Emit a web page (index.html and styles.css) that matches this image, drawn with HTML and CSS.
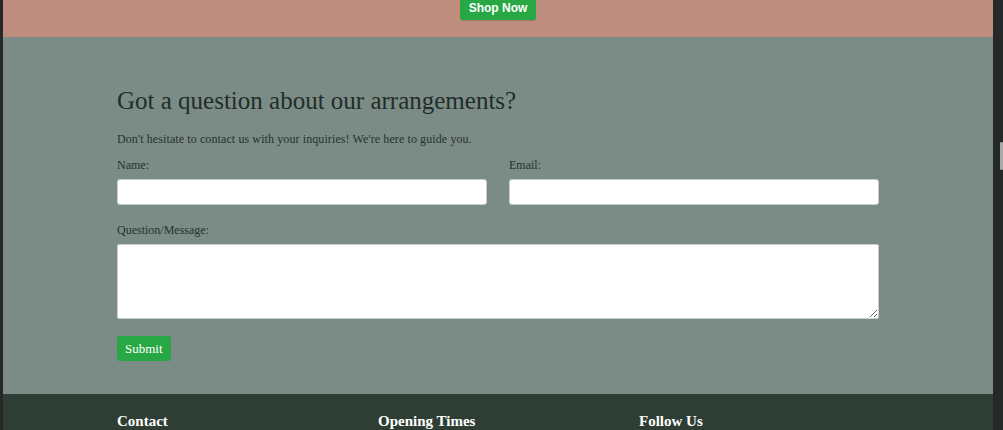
FILE: index.html
```html
<!DOCTYPE html>
<html lang="en">
<head>
<meta charset="utf-8">
<title>Contact</title>
<link rel="stylesheet" href="styles.css">
</head>
<body>
<div class="page">
  <section class="promo">
    <a class="shop-btn" href="#">Shop Now</a>
  </section>
  <section class="contact">
    <div class="container">
      <h2 class="contact-title">Got a question about our arrangements?</h2>
      <p class="contact-intro">Don't hesitate to contact us with your inquiries! We're here to guide you.</p>
      <form class="contact-form">
        <div class="form-row">
          <div class="field">
            <label class="field-label" for="name">Name:</label>
            <input class="field-input" id="name" type="text">
          </div>
          <div class="field">
            <label class="field-label" for="email">Email:</label>
            <input class="field-input" id="email" type="email">
          </div>
        </div>
        <div class="field">
          <label class="field-label" for="msg">Question/Message:</label>
          <textarea class="field-textarea" id="msg"></textarea>
        </div>
        <button class="submit-btn" type="button">Submit</button>
      </form>
    </div>
  </section>
  <footer class="footer">
    <div class="container footer-grid">
      <h3 class="footer-title">Contact</h3>
      <h3 class="footer-title">Opening Times</h3>
      <h3 class="footer-title">Follow Us</h3>
    </div>
  </footer>
</div>
<div class="scroll-thumb"></div>
</body>
</html>
```
FILE: styles.css
```css
html, body {
  margin: 0;
  height: 100%;
  overflow: hidden;
}
body {
  background: #262829;
  padding: 0 10px 0 3px;
  font-family: "Liberation Serif", "Times New Roman", serif;
  color: #27322e;
}
.page {
  background: #7a8c85;
  height: 100%;
}
.promo {
  height: 37px;
  box-sizing: border-box;
  background: #be8d7d;
  display: flex;
  justify-content: center;
  align-items: flex-end;
  padding-bottom: 17px;
  overflow: hidden;
}
.shop-btn {
  display: block;
  height: 23px;
  line-height: 23px;
  padding: 0 9px;
  background: #28a745;
  color: #fff;
  font-family: "Liberation Sans", Arial, sans-serif;
  font-weight: bold;
  font-size: 12px;
  text-decoration: none;
  border-radius: 3px;
  box-shadow: 0 1px 1px rgba(0,0,0,0.15);
}
.contact {
  height: 357px;
  box-sizing: border-box;
  padding-top: 48px;
}
.container {
  width: 762px;
  margin: 0 auto;
}
.contact-title {
  margin: 0 0 14px;
  font-size: 25px;
  font-weight: normal;
  line-height: 32px;
  color: #222c29;
}
.contact-intro {
  margin: 0 0 10px;
  font-size: 12px;
  line-height: 16px;
  letter-spacing: 0.1px;
}
.form-row {
  display: grid;
  grid-template-columns: 1fr 1fr;
  column-gap: 22px;
  margin-bottom: 17px;
}
.field {
  display: flex;
  flex-direction: column;
}
.field-label {
  font-size: 12px;
  line-height: 16px;
  margin-bottom: 6px;
}
.field-input {
  height: 26px;
  box-sizing: border-box;
  border: 1px solid #c9cfcd;
  border-radius: 3px;
  background: #fff;
  margin: 0;
}
.field-textarea {
  height: 75px;
  box-sizing: border-box;
  border: 1px solid #c9cfcd;
  border-radius: 2px;
  background: #fff;
  margin: 0;
  resize: vertical;
}
.submit-btn {
  margin-top: 17px;
  height: 25px;
  padding: 0 8px;
  border: none;
  border-radius: 3px;
  background: #28a745;
  color: #fff;
  font-family: "Liberation Serif", "Times New Roman", serif;
  font-size: 13px;
  font-weight: normal;
}
.footer {
  background: #2e3e35;
  height: 36px;
  overflow: hidden;
}
.footer-grid {
  display: grid;
  grid-template-columns: repeat(3, 1fr);
  column-gap: 21px;
  padding-top: 17px;
}
.footer-title {
  margin: 0;
  font-size: 15px;
  line-height: 20px;
  font-weight: bold;
  color: #fff;
}
.scroll-thumb {
  position: absolute;
  right: 0;
  top: 142px;
  width: 3px;
  height: 28px;
  background: #a9a9a9;
  border-radius: 1px;
}
```
